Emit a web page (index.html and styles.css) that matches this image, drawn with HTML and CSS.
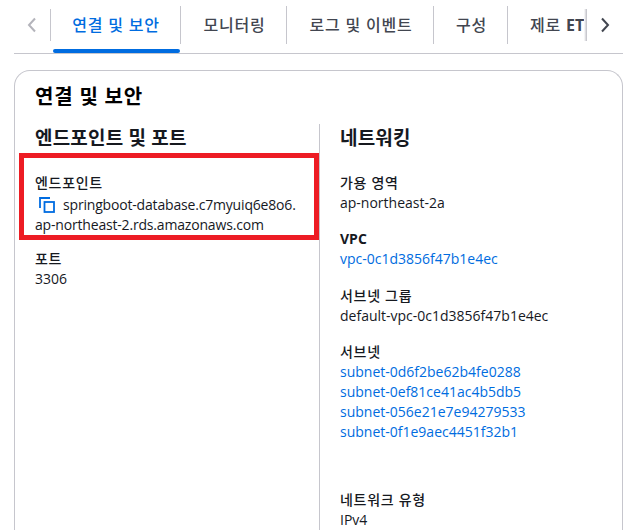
FILE: index.html
```html
<!DOCTYPE html>
<html lang="ko">
<head>
<meta charset="utf-8">
<title>연결 및 보안</title>
<link rel="stylesheet" href="styles.css">
</head>
<body>
<div class="tabs">
  <button class="arrow arrow-left" aria-label="이전">
    <svg width="10" height="16" viewBox="0 0 10 16"><path d="M8 1.5 2 8l6 6.5" fill="none" stroke="#b4b4bb" stroke-width="2"/></svg>
  </button>
  <div class="tablist">
    <div class="tab active">연결 및 보안</div>
    <div class="tab t2">모니터링</div>
    <div class="tab t3">로그 및 이벤트</div>
    <div class="tab t4">구성</div>
    <div class="tab t5">제로 <span class="tab-latin">ETL</span> 통합</div>
  </div>
  <button class="arrow arrow-right" aria-label="다음">
    <svg width="10" height="16" viewBox="0 0 10 16"><path d="M2 1.5 8 8l-6 6.5" fill="none" stroke="#424650" stroke-width="2"/></svg>
  </button>
</div>
<section class="card">
  <h2 class="card-title">연결 및 보안</h2>
  <div class="cols">
    <div class="col col-left">
      <h3 class="col-title">엔드포인트 및 포트</h3>
      <div class="highlight">
        <div class="label">엔드포인트</div>
        <div class="value endpoint">
          <svg class="copy" width="16" height="16" viewBox="0 0 16 16"><path d="M1 11V1h10" fill="none" stroke="#006ce0" stroke-width="1.8"/><rect x="5.5" y="5" width="9.5" height="10" fill="none" stroke="#006ce0" stroke-width="1.8"/></svg>springboot-database.c7myuiq6e8o6.<br>ap-northeast-2.rds.amazonaws.com
        </div>
      </div>
      <div class="field port">
        <div class="label">포트</div>
        <div class="value">3306</div>
      </div>
    </div>
    <div class="col col-right">
      <h3 class="col-title">네트워킹</h3>
      <div class="field first">
        <div class="label">가용 영역</div>
        <div class="value">ap-northeast-2a</div>
      </div>
      <div class="field">
        <div class="label strong">VPC</div>
        <div class="value"><a href="#">vpc-0c1d3856f47b1e4ec</a></div>
      </div>
      <div class="field">
        <div class="label">서브넷 그룹</div>
        <div class="value">default-vpc-0c1d3856f47b1e4ec</div>
      </div>
      <div class="field subnets">
        <div class="label">서브넷</div>
        <div class="value"><a href="#">subnet-0d6f2be62b4fe0288</a></div>
        <div class="value"><a href="#">subnet-0ef81ce41ac4b5db5</a></div>
        <div class="value"><a href="#">subnet-056e21e7e94279533</a></div>
        <div class="value"><a href="#">subnet-0f1e9aec4451f32b1</a></div>
      </div>
      <div class="field spaced">
        <div class="label">네트워크 유형</div>
        <div class="value">IPv4</div>
      </div>
    </div>
  </div>
</section>
</body>
</html>
```
FILE: styles.css
```css
html, body {
  margin: 0;
  height: 530px;
  overflow: hidden;
  background: #fff;
}
body {
  padding: 0 19px 0 14px;
  font-family: "Open Sans", "Noto Sans CJK KR", sans-serif;
  font-size: 14px;
  line-height: 20px;
  color: #16191f;
}
.tabs {
  display: flex;
  align-items: flex-start;
  height: 54px;
  padding-top: 6px;
  box-sizing: border-box;
  border-bottom: 1px solid #c6c6cd;
}
.arrow {
  flex: none;
  width: 36px;
  height: 32px;
  margin-top: 3px;
  border: 0;
  background: none;
  padding: 0;
  display: flex;
  align-items: center;
  justify-content: center;
}
.tablist {
  flex: 1;
  display: flex;
  overflow: hidden;
  min-width: 0;
  height: 47px;
  position: relative;
}
.tablist::before,
.tablist::after {
  content: "";
  position: absolute;
  top: 3px;
  height: 32px;
  z-index: 1;
}
.tablist::before {
  left: 0;
  width: 1px;
  background: #c6c6cd;
}
.tablist::after {
  right: 0;
  width: 3px;
  background: linear-gradient(to right, #fff, #bdbdc4);
}
.tab {
  flex: none;
  height: 38px;
  line-height: 38px;
  padding-left: 2px;
  font-size: 16px;
  letter-spacing: 0.8px;
  font-weight: 500;
  color: #424650;
  text-align: center;
  white-space: nowrap;
  border-right: 1px solid #c6c6cd;
  box-sizing: border-box;
  position: relative;
}
.tab.active {
  width: 131px;
  color: #006ce0;
}
.tab.active::after {
  content: "";
  position: absolute;
  left: 3px;
  right: 0;
  bottom: -9px;
  height: 4px;
  border-radius: 2px;
  background: #006ce0;
}
.tab-latin { font-weight: 700; letter-spacing: 0; }
.t2 { width: 106px; }
.t3 { width: 147px; }
.t4 { width: 74px; }
.t5 {
  width: 79px;
  padding-left: 22px;
  text-align: left;
  border-right: 0;
  overflow: hidden;
}
.card {
  margin-top: 16px;
  border: 1px solid #c6c6cd;
  border-bottom: 0;
  border-radius: 16px 16px 0 0;
  height: 470px;
  padding: 12px 20px 0;
  box-sizing: border-box;
}
.card-title {
  margin: 0;
  font-size: 20px;
  line-height: 28px;
  letter-spacing: 0.8px;
  font-weight: 700;
  color: #000;
}
.cols {
  display: grid;
  grid-template-columns: 285px 1fr;
  margin-top: 13px;
}
.col-left { border-right: 1px solid #c6c6cd; }
.col-right { padding-left: 20px; }
.col-title {
  margin: 0;
  padding-top: 1px;
  font-size: 19px;
  line-height: 26px;
  letter-spacing: 0.2px;
  font-weight: 700;
  color: #16191f;
}
.highlight {
  margin: 2px 0 0 -16px;
  width: 300px;
  height: 87px;
  border: 5px solid #ed1c24;
  box-sizing: border-box;
  padding: 14px 0 0 11px;
}
.endpoint { margin-top: 2px; white-space: nowrap; letter-spacing: -0.18px; }
.copy { vertical-align: -3px; margin: 0 8px 0 4px; }
.label { line-height: 21px; font-weight: 500; letter-spacing: 0.7px; }
.label.strong { font-weight: 700; line-height: 20px; letter-spacing: 0; }
.field { margin-top: 16px; }
.field.port { margin-top: 8px; }
.field.first { margin-top: 21px; }
.field.subnets { margin-top: 15px; }
.field.spaced { margin-top: 47px; }
a { color: #006ce0; text-decoration: none; }
```
